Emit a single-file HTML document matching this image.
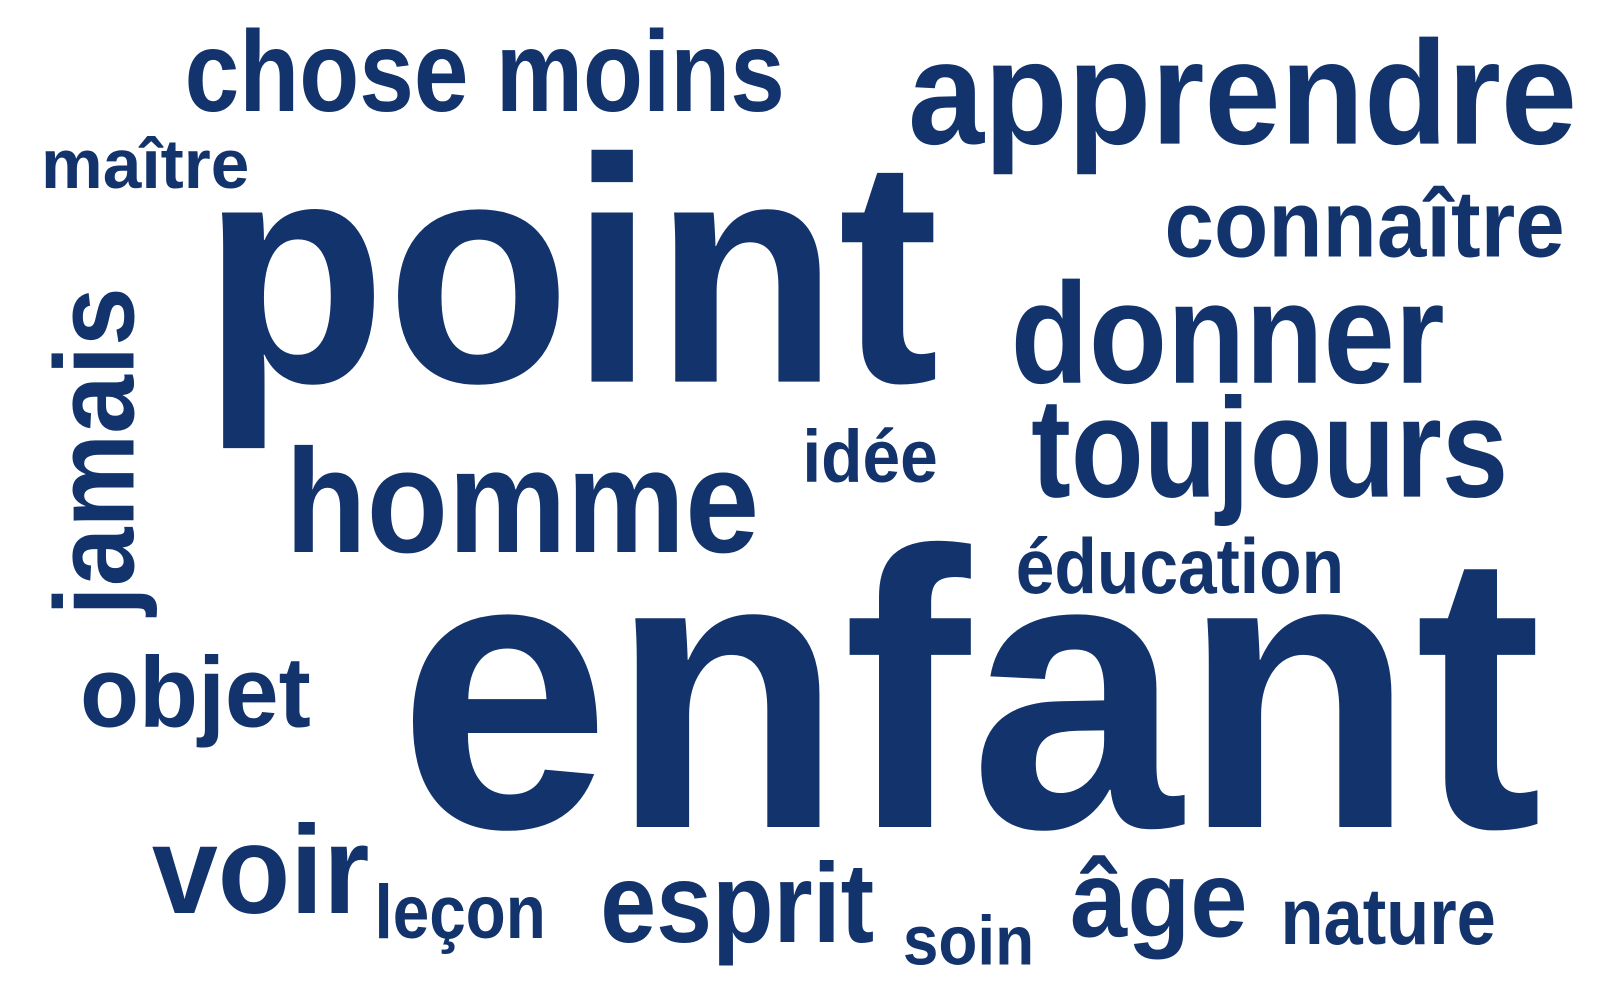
<!DOCTYPE html>
<html><head><meta charset="utf-8"><style>
html,body{margin:0;padding:0;background:#fff;width:1600px;height:1000px;overflow:hidden}
svg text{font-family:"Liberation Sans",sans-serif;font-weight:bold;fill:#12336c}
</style></head><body>
<svg width="1600" height="1000" viewBox="0 0 1600 1000" xmlns="http://www.w3.org/2000/svg">
<g transform="scale(1.026)">
<text x="180" y="108" font-size="112" textLength="585" lengthAdjust="spacingAndGlyphs">chose moins</text>
<text x="40" y="183" font-size="68" textLength="203" lengthAdjust="spacingAndGlyphs">maître</text>
<text x="885" y="140" font-size="144" textLength="652" lengthAdjust="spacingAndGlyphs">apprendre</text>
<text x="197" y="372" font-size="312" textLength="718" lengthAdjust="spacingAndGlyphs">point</text>
<text x="1135" y="250" font-size="92" textLength="390" lengthAdjust="spacingAndGlyphs">connaître</text>
<text x="985" y="373" font-size="140" textLength="423" lengthAdjust="spacingAndGlyphs">donner</text>
<text transform="translate(130,600) rotate(-90)" x="0" y="0" font-size="110" textLength="320" lengthAdjust="spacingAndGlyphs">jamais</text>
<text x="278" y="538" font-size="144" textLength="462" lengthAdjust="spacingAndGlyphs">homme</text>
<text x="782" y="470" font-size="72" textLength="132" lengthAdjust="spacingAndGlyphs">idée</text>
<text x="1005" y="484" font-size="138" textLength="465" lengthAdjust="spacingAndGlyphs">toujours</text>
<text x="990" y="578" font-size="76" textLength="320" lengthAdjust="spacingAndGlyphs">éducation</text>
<text x="388" y="806" font-size="385" textLength="1115" lengthAdjust="spacingAndGlyphs">enfant</text>
<text x="78" y="708" font-size="98" textLength="225" lengthAdjust="spacingAndGlyphs">objet</text>
<text x="148" y="890" font-size="122" textLength="212" lengthAdjust="spacingAndGlyphs">voir</text>
<text x="365" y="914" font-size="74" textLength="167" lengthAdjust="spacingAndGlyphs">leçon</text>
<text x="585" y="918" font-size="110" textLength="267" lengthAdjust="spacingAndGlyphs">esprit</text>
<text x="880" y="940" font-size="68" textLength="128" lengthAdjust="spacingAndGlyphs">soin</text>
<text x="1043" y="913" font-size="106" textLength="173" lengthAdjust="spacingAndGlyphs">âge</text>
<text x="1248" y="920" font-size="78" textLength="210" lengthAdjust="spacingAndGlyphs">nature</text>
</g>
</svg>
</body></html>
